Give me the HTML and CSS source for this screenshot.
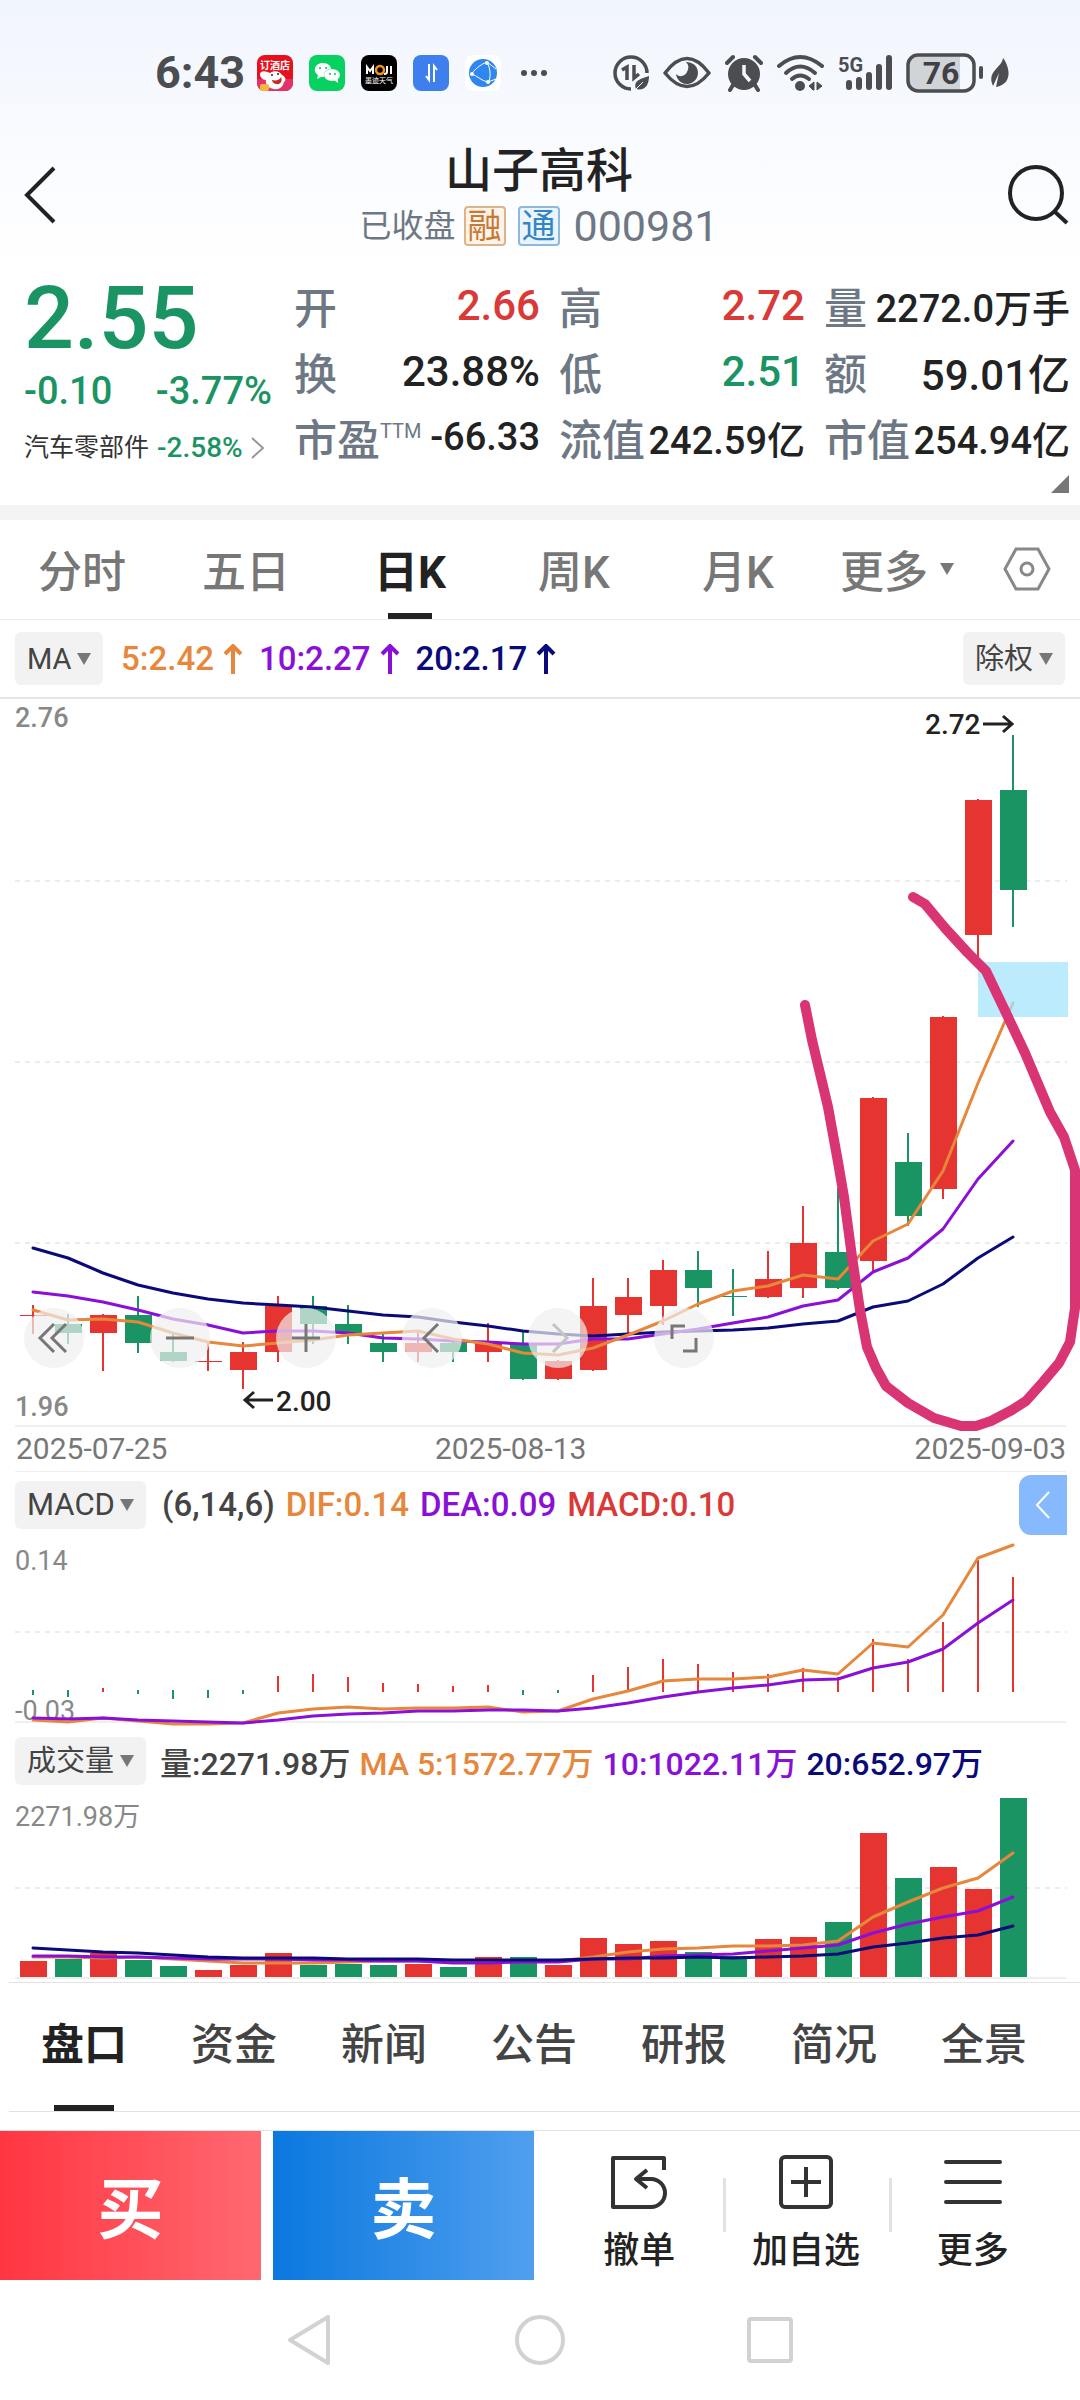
FILE: index.html
```html
<!DOCTYPE html>
<html lang="zh-CN">
<head>
    <meta charset="UTF-8">
    <meta name="viewport" content="width=device-width, initial-scale=1.0">
    <title>山子高科 000981</title>
    <link rel="stylesheet" href="styles.css">
</head>
<body>
    <div class="top">
        <!-- Status bar -->
        <div class="status-bar">
            <div class="status-left">
                <span class="clock">6:43</span>
                <svg class="app-icon" viewBox="0 0 36 36">
                    <rect width="36" height="36" rx="8" fill="#e8101c"/>
                    <path d="M0 24h36v4a8 8 0 0 1-8 8H8a8 8 0 0 1-8-8z" fill="#e0336a"/>
                    <text x="18" y="14" font-size="10" text-anchor="middle" fill="#fff" font-weight="700">订酒店</text>
                    <path d="M4 17c3-2 7 0 9 1 4-3 10-2 12 2 3 1 5 5 2 7-1 5-5 8-10 7-6-1-9-5-8-9-4 0-8-5-5-8z" fill="#fff"/>
                    <path d="M15 25c4 1 8 0 9-3 2 4-1 8-4 7-3 0-5-2-5-4z" fill="#c92a20"/>
                    <circle cx="15" cy="20" r="1" fill="#222"/><circle cx="21" cy="19" r="1" fill="#222"/>
                    <rect x="3" y="29" width="9" height="7" rx="2" fill="#f6b63c"/>
                </svg>
                <svg class="app-icon" viewBox="0 0 36 36">
                    <rect width="36" height="36" rx="8" fill="#07d160"/>
                    <path d="M14 8c5 0 8 3 8 6-4 0-8 3-7 8h-3l-4 2 1-4C3 16 6 8 14 8z" fill="#fff"/>
                    <ellipse cx="23" cy="20" rx="8" ry="6" fill="#fff"/>
                    <path d="M25 25l4 3v-4z" fill="#fff"/>
                    <g fill="#07c55b"><circle cx="11" cy="13" r="1"/><circle cx="17" cy="13" r="1"/><circle cx="21" cy="19" r="1"/><circle cx="26" cy="19" r="1"/></g>
                </svg>
                <svg class="app-icon" viewBox="0 0 36 36">
                    <rect width="36" height="36" rx="8" fill="#000"/>
                    <path d="M6 19v-7l3 4 3-4v7M26 11v6q0 2-3 2M30 11v8" fill="none" stroke="#fff" stroke-width="2"/>
                    <circle cx="19" cy="15" r="4" fill="none" stroke="#f5921e" stroke-width="2.5"/>
                    <text x="18" y="28" font-size="7" text-anchor="middle" fill="#fff">墨迹天气</text>
                </svg>
                <svg class="app-icon" viewBox="0 0 36 36">
                    <rect width="36" height="36" rx="8" fill="#3f7eed"/>
                    <path d="M16 9v16l-3-4M21 27V11l3 4" fill="none" stroke="#fff" stroke-width="2"/>
                </svg>
                <svg class="app-icon" viewBox="0 0 36 36">
                    <rect width="36" height="36" rx="8" fill="#fff"/>
                    <circle cx="18" cy="18" r="14" fill="#2f86ee"/>
                    <path d="M5 20C10 15 14 10 22 7M22 7c4 8 4 16 1 21M6 19c6 1 10 7 17 8M22 7l9 7M23 27l8-3" fill="none" stroke="#fff"/>
                    <circle cx="22" cy="8" r="2" fill="#fff"/><circle cx="7" cy="19" r="2" fill="#fff"/><circle cx="23" cy="27" r="2" fill="#fff"/>
                </svg>
                <svg class="more-dots" viewBox="0 0 26 36"><g fill="#4b4d50"><circle cx="3" cy="18" r="3"/><circle cx="13" cy="18" r="3"/><circle cx="23" cy="18" r="3"/></g></svg>
            </div>
            <div class="status-right">
                <svg width="36" height="38" viewBox="0 0 36 38">
                    <path d="M18 35A16 16 0 1 1 34 19" fill="none" stroke="#4b4d50" stroke-width="3.5"/>
                    <path d="M9 16l5-3v13M21 11v13l5-4" fill="none" stroke="#4b4d50" stroke-width="3.5"/>
                    <path d="M36 22c0 9-4 15-13 13-3-9 5-10 13-13z" fill="#4b4d50"/>
                    <path d="M21 37l9-9" stroke="#f5f8fe"/>
                </svg>
                <svg width="48" height="38" viewBox="0 0 48 38">
                    <path d="M2 19Q24-10 46 19Q24 46 2 19z" fill="none" stroke="#4b4d50" stroke-width="3.5" stroke-linejoin="round"/>
                    <path d="M23 8a11 11 0 1 1-10 12c4 4 9 2 11-2s2-7-1-10z" fill="#4b4d50"/>
                </svg>
                <svg width="38" height="38" viewBox="0 0 38 38">
                    <circle cx="19" cy="20" r="16" fill="#4b4d50"/>
                    <path d="M2 9l6-6M36 9l-6-6M8 31l-3 5M30 31l3 5" stroke="#4b4d50" stroke-width="4" stroke-linecap="round"/>
                    <path d="M19 11v9l6 7" fill="none" stroke="#f5f8fe" stroke-width="3.5"/>
                </svg>
                <svg width="47" height="38" viewBox="0 0 47 38">
                    <g fill="none" stroke="#4b4d50" stroke-width="4" stroke-linecap="round"><path d="M2 12Q23-6 45 12"/><path d="M9 19Q23 6 38 19"/><path d="M15 25Q23 18 32 25"/></g>
                    <circle cx="23" cy="32" r="5" fill="#4b4d50"/>
                    <path d="M37 28v8h-1l-4-4zM40 28v8l5-4z" fill="#4b4d50" stroke="#4b4d50"/>
                </svg>
                <svg width="54" height="46" viewBox="0 -4 54 46">
                    <text x="0" y="18" font-size="20" font-weight="700" fill="#4b4d50">5G</text>
                    <g stroke="#4b4d50" stroke-width="6" stroke-linecap="round"><path d="M11 29v4M21 26v7M31 21v12M41 13v20M51 4v29"/></g>
                </svg>
                <svg width="78" height="40" viewBox="0 0 78 40">
                    <path d="M12 3h42v34H12a9 9 0 0 1-9-9V12a9 9 0 0 1 9-9z" fill="#d0d3d8"/>
                    <rect x="2" y="2" width="66" height="36" rx="10" fill="none" stroke="#4b4d50" stroke-width="3.5"/>
                    <text x="35" y="31" font-size="32" font-weight="700" text-anchor="middle" fill="#3f4144">76</text>
                    <path d="M75 15v9" stroke="#4b4d50" stroke-width="4" stroke-linecap="round"/>
                </svg>
                <svg class="leaf" width="20" height="34" viewBox="0 0 20 34">
                    <path d="M13 2c7 9 10 26-7 29l3-14-6 13C-4 15 12 12 13 2z" fill="#4b4d50"/>
                </svg>
            </div>
        </div>

        <!-- Header Section -->
        <header class="header">
            <button class="icon-button back" aria-label="返回">
                <svg width="34" height="58" viewBox="0 0 34 58"><path d="M31 2L4 29l27 27" fill="none" stroke="#222" stroke-width="4"/></svg>
            </button>
            <div class="header-title">
                <h1>山子高科</h1>
                <p class="header-sub">已收盘 <span class="tag tag-orange">融</span><span class="tag tag-blue">通</span> <span class="code">000981</span></p>
            </div>
            <button class="icon-button" aria-label="搜索">
                <svg width="64" height="62" viewBox="0 0 64 62"><circle cx="29" cy="29" r="26" fill="none" stroke="#222" stroke-width="4"/><path d="M47 47l13 12" stroke="#222" stroke-width="4"/></svg>
            </button>
        </header>
    </div>

    <!-- Quote -->
    <section class="quote">
        <div class="quote-price">
            <div class="price">2.55</div>
            <div class="change"><span>-0.10</span><span>-3.77%</span></div>
            <a class="industry" href="#industry">汽车零部件 <span>-2.58%</span>
                <svg width="14" height="22" viewBox="0 0 14 22"><path d="M1 1l11 10L1 21" fill="none" stroke="#999" stroke-width="2"/></svg>
            </a>
        </div>
        <dl class="quote-grid">
            <div><dt>开</dt><dd class="red">2.66</dd></div>
            <div><dt>高</dt><dd class="red">2.72</dd></div>
            <div><dt>量</dt><dd class="compact">2272.0万手</dd></div>
            <div><dt>换</dt><dd>23.88%</dd></div>
            <div><dt>低</dt><dd class="green">2.51</dd></div>
            <div><dt>额</dt><dd>59.01亿</dd></div>
            <div><dt>市盈<sup>TTM</sup></dt><dd class="compact">-66.33</dd></div>
            <div><dt>流值</dt><dd class="compact">242.59亿</dd></div>
            <div><dt>市值</dt><dd class="compact">254.94亿</dd></div>
        </dl>
        <span class="corner"></span>
    </section>

    <!-- Period tabs -->
    <nav class="period-tabs">
        <button>分时</button>
        <button>五日</button>
        <button class="active">日K</button>
        <button>周K</button>
        <button>月K</button>
        <button class="more">更多<i class="caret"></i></button>
        <button class="settings" aria-label="设置">
            <svg width="48" height="44" viewBox="0 0 48 44"><path d="M13 2h22l11 20-11 20H13L2 22z" fill="none" stroke="#888" stroke-width="3"/><circle cx="24" cy="22" r="6" fill="none" stroke="#888" stroke-width="3"/></svg>
        </button>
    </nav>

    <div class="legend ma-legend">
        <label class="picker"><select aria-label="主图指标"><option>MA</option></select><i class="caret"></i></label>
        <span class="orange">5:2.42<svg class="up" viewBox="0 0 20 30"><path d="M10 30V2M2 10l8-8 8 8"/></svg></span>
        <span class="purple">10:2.27<svg class="up" viewBox="0 0 20 30"><path d="M10 30V2M2 10l8-8 8 8"/></svg></span>
        <span class="navy">20:2.17<svg class="up" viewBox="0 0 20 30"><path d="M10 30V2M2 10l8-8 8 8"/></svg></span>
        <label class="picker right"><select aria-label="复权"><option>除权</option></select><i class="caret"></i></label>
    </div>

    <!-- Candles -->
    <div class="chart">
        <svg id="kline" viewBox="0 699 1080 773">
            <g class="dash"><path d="M15 881H1067M15 1062H1067M15 1243H1067"/></g>
            <g class="rule"><path d="M15 1426H1066M15 1472H1066"/></g>
            <g id="candles"></g>
            <g id="klineLines"></g>
            <rect x="978" y="962" width="90" height="55" fill="#a5e4fe" fill-opacity=".75"/>
            <g class="axis" font-weight="500"><text x="15" y="727">2.76</text><text x="15" y="1416">1.96</text></g>
            <g class="mark">
                <text x="925" y="734">2.72</text><path d="M983 724h29M1003 716l9 8-9 8"/>
                <text x="276" y="1411">2.00</text><path d="M273 1400h-28M254 1392l-9 8 9 8"/>
            </g>
            <g class="date"><text x="16" y="1459">2025-07-25</text><text x="435" y="1459">2025-08-13</text><text x="1066" y="1459" text-anchor="end">2025-09-03</text></g>
        </svg>
        <div class="chart-tools">
            <button aria-label="最左"><svg viewBox="0 0 60 60"><path d="M30 16L16 30l14 14M42 16L28 30l14 14"/></svg></button>
            <button aria-label="缩小"><svg viewBox="0 0 60 60"><path d="M16 30h28"/></svg></button>
            <button aria-label="放大"><svg viewBox="0 0 60 60"><path d="M16 30h28M30 16v28"/></svg></button>
            <button aria-label="左移"><svg viewBox="0 0 60 60"><path d="M36 16L22 30l14 14"/></svg></button>
            <button aria-label="右移" disabled><svg viewBox="0 0 60 60"><path d="M25 16l14 14-14 14"/></svg></button>
            <button aria-label="全屏"><svg viewBox="0 0 60 60"><path d="M18 31V18h13M42 30v13H29"/></svg></button>
        </div>
        <svg class="drawing" viewBox="0 699 1080 773">
            <path d="M805 1005L812 1040L828 1107L838 1162L844 1197L852 1257L860 1310L867 1347L876 1368L886 1386L908 1403L934 1418L961 1426H976L991 1421L1012 1410L1026 1401L1043 1382L1059 1363L1070 1342L1075 1308V1170L1064 1137L1050 1112L1025 1053L1008 1017L986 971L967 952L945 928L925 904L913 897"/>
        </svg>
    </div>

    <!-- MACD -->
    <div class="legend macd-legend">
        <label class="picker"><select aria-label="副图指标一"><option>MACD</option></select><i class="caret"></i></label>
        <span>(6,14,6)</span>
        <span class="orange">DIF:0.14</span>
        <span class="purple">DEA:0.09</span>
        <span class="red">MACD:0.10</span>
        <button class="expand" aria-label="展开"><svg width="16" height="28" viewBox="0 0 16 28"><path d="M14 1L2 14l12 13" fill="none" stroke="#fff" stroke-width="2"/></svg></button>
    </div>
    <svg class="plot" id="macd" viewBox="0 1537 1080 190">
        <g class="dash"><path d="M15 1632H1067"/></g>
        <g class="rule"><path d="M15 1722H1066"/></g>
        <g class="axis"><text x="15" y="1570">0.14</text><text x="15" y="1720">-0.03</text></g>
        <g id="macdBars"></g>
        <g id="macdLines"></g>
    </svg>

    <!-- Volume -->
    <div class="legend volume-legend">
        <label class="picker"><select aria-label="副图指标二"><option>成交量</option></select><i class="caret"></i></label>
        <span>量:2271.98万</span>
        <span class="orange">MA 5:1572.77万</span>
        <span class="purple">10:1022.11万</span>
        <span class="navy">20:652.97万</span>
    </div>
    <svg class="plot" id="volume" viewBox="0 1794 1080 188">
        <g class="dash"><path d="M15 1888H1067"/></g>
        <g class="rule"><path d="M15 1978H1066"/></g>
        <g class="axis"><text x="15" y="1826">2271.98万</text></g>
        <g id="volumeBars"></g>
        <g id="volumeLines"></g>
    </svg>

    <!-- Info tabs -->
    <nav class="info-tabs">
        <button class="active">盘口</button>
        <button>资金</button>
        <button>新闻</button>
        <button>公告</button>
        <button>研报</button>
        <button>简况</button>
        <button>全景</button>
    </nav>

    <!-- Trade bar -->
    <div class="trade-bar">
        <button class="trade buy">买</button>
        <button class="trade sell">卖</button>
        <div class="trade-links">
            <button>
                <svg width="60" height="60" viewBox="0 0 60 60"><path d="M55 17V5H4v49h38a13 13 0 0 0 0-28H27M38 17l-11 9 11 9"/></svg>
                撤单
            </button>
            <button>
                <svg width="60" height="60" viewBox="0 0 60 60"><rect x="5" y="4" width="50" height="50" rx="4"/><path d="M30 14v30M15 29h30"/></svg>
                加自选
            </button>
            <button>
                <svg width="60" height="60" viewBox="0 0 60 60"><path d="M3 9h54M3 29h54M3 49h54" stroke-linecap="round"/></svg>
                更多
            </button>
        </div>
    </div>

    <div class="system-nav">
        <button aria-label="后退"><svg width="48" height="54" viewBox="0 0 48 54"><path d="M42 4v46L4 27z"/></svg></button>
        <button aria-label="主页"><svg width="54" height="54" viewBox="0 0 54 54"><circle cx="27" cy="27" r="23"/></svg></button>
        <button aria-label="任务"><svg width="48" height="54" viewBox="0 0 48 54"><rect x="3" y="6" width="42" height="42" rx="2"/></svg></button>
    </div>

    <script src="script.js"></script>
</body>
</html>
```
FILE: styles.css
```css
/* General Styles */
* {
    box-sizing: border-box;
}

body {
    font-family: Roboto, "Noto Sans CJK SC", sans-serif;
    margin: 0;
    background-color: #fff;
    color: #222;
}

button {
    font-family: inherit;
    margin: 0;
    padding: 0;
    border: none;
    background: none;
    color: inherit;
    cursor: pointer;
}

svg {
    display: block;
}

.red { color: #d93a37; }
.green { color: #1b9463; }
.orange { color: #e6873c; }
.purple { color: #8a10d8; }
.navy { color: #0a0a78; }

/* Status bar */
.top {
    background: linear-gradient(#f1f5fe, #fff);
}

.status-bar {
    display: flex;
    justify-content: space-between;
    align-items: center;
    height: 110px;
    padding: 36px 70px 0 155px;
}

.status-left, .status-right {
    display: flex;
    align-items: center;
}

.status-left {
    gap: 16px;
}

.status-right {
    gap: 14px;
}

.clock {
    margin-right: -4px;
    font-size: 45px;
    line-height: 38px;
    font-weight: 700;
    color: #4b4d50;
}

.app-icon {
    width: 36px;
    height: 36px;
}

.more-dots {
    width: 26px;
    height: 36px;
    margin-left: 4px;
}

.leaf {
    margin-left: -8px;
}

/* Header Section */
.header {
    display: flex;
    align-items: center;
    justify-content: space-between;
    height: 154px;
    padding: 16px 9px 0 23px;
}

.header .icon-button {
    width: 64px;
}

.header .back {
    width: 48px;
}

.header-title {
    text-align: center;
}

.header-title h1 {
    margin: 0;
    padding-top: 4px;
    font-size: 47px;
    line-height: 58px;
    font-weight: 500;
}

.header-sub {
    display: flex;
    align-items: center;
    justify-content: center;
    gap: 8px;
    margin: 0;
    font-size: 32px;
    line-height: 52px;
    color: #6e7884;
}

.header-sub .code {
    font-size: 43px;
    margin-left: 6px;
}

.tag {
    width: 42px;
    height: 40px;
    border: 2px solid;
    border-radius: 4px;
    font-size: 34px;
    line-height: 36px;
    text-align: center;
}

.tag + .tag {
    margin-left: 4px;
}

.tag-orange {
    color: #c67a35;
    border-color: #dcb48c;
    background-color: #fdf3e8;
}

.tag-blue {
    color: #3585c6;
    border-color: #8cb9dc;
    background-color: #eaf4fd;
}

/* Quote */
.quote {
    position: relative;
    display: flex;
    align-items: flex-start;
    gap: 22px;
    padding: 8px 10px 27px 24px;
    border-bottom: 15px solid #f4f4f4;
}

.quote-price {
    width: 248px;
    color: #1b9463;
}

.price {
    font-size: 88px;
    line-height: 92px;
    font-weight: 500;
}

.change {
    display: flex;
    justify-content: space-between;
    font-size: 38px;
    line-height: 54px;
    font-weight: 500;
}

.industry {
    display: flex;
    align-items: center;
    gap: 8px;
    font-size: 25px;
    line-height: 60px;
    color: #333;
    text-decoration: none;
    white-space: nowrap;
}

.industry span {
    font-size: 28px;
    font-weight: 500;
    color: #1b9463;
}

.quote-grid {
    flex: 1;
    display: grid;
    grid-template-columns: repeat(3, 1fr);
    column-gap: 19px;
    margin: 0;
}

.quote-grid div {
    display: flex;
    justify-content: space-between;
    align-items: center;
    height: 66px;
    white-space: nowrap;
}

.quote-grid dt {
    font-size: 43px;
    font-weight: 500;
    color: #6e7884;
}

.quote-grid sup {
    font-size: 20px;
    line-height: 20px;
    font-weight: 400;
    vertical-align: 18px;
}

.quote-grid dd {
    margin: 0;
    font-size: 42px;
    font-weight: 500;
}

.quote-grid .compact {
    font-size: 38px;
}

.corner {
    position: absolute;
    right: 11px;
    bottom: 12px;
    border-style: solid;
    border-width: 0 0 18px 18px;
    border-color: transparent transparent #777;
}

/* Period tabs */
.period-tabs {
    display: grid;
    grid-template-columns: repeat(5, 164fr) 145fr 115fr;
    height: 100px;
    border-bottom: 1px solid #eee;
}

.period-tabs button {
    position: relative;
    padding-bottom: 2px;
    font-size: 44px;
    font-weight: 500;
    color: #777;
}

.period-tabs .more {
    display: flex;
    align-items: center;
    justify-content: flex-end;
    gap: 12px;
    padding-right: 11px;
}

.period-tabs .settings {
    display: flex;
    align-items: center;
    justify-content: center;
    padding-left: 8px;
}

.period-tabs .active, .info-tabs .active {
    color: #222;
    font-weight: 700;
}

.active::after {
    content: "";
    position: absolute;
    left: 50%;
    bottom: 0;
    width: 44px;
    height: 6px;
    transform: translateX(-50%);
    background-color: #222;
}

.caret {
    border-style: solid;
    border-width: 12px 7px 0;
    border-color: #777 transparent transparent;
}

/* Indicator rows */
.legend {
    display: flex;
    align-items: center;
    gap: 11px;
    padding: 0 15px;
    font-size: 32px;
    font-weight: 500;
    color: #444;
    white-space: nowrap;
}

.legend span {
    display: flex;
    align-items: center;
    gap: 9px;
}

.legend .picker + span {
    margin-left: 5px;
}

.ma-legend {
    height: 79px;
    border-bottom: 2px solid #e4e6e6;
    font-size: 33px;
    gap: 16px;
}

.ma-legend .picker + span {
    margin-left: 2px;
}

.macd-legend {
    height: 65px;
    padding-right: 13px;
    font-size: 33px;
}

.volume-legend {
    gap: 9px;
    height: 67px;
}

.picker {
    display: flex;
    align-items: center;
    gap: 5px;
    height: 48px;
    padding: 0 12px;
    border-radius: 6px;
    background-color: #f2f2f2;
}

.ma-legend .picker {
    height: 53px;
}

.picker select {
    appearance: none;
    padding: 0;
    border: none;
    background: none;
    font-family: inherit;
    font-size: 29px;
    color: #444;
}

.macd-legend .picker select {
    font-size: 31px;
}

.right, .expand {
    margin-left: auto;
}

.up {
    width: 20px;
    height: 30px;
    fill: none;
    stroke: currentColor;
    stroke-width: 4;
}

.expand {
    display: flex;
    align-items: center;
    justify-content: center;
    width: 48px;
    height: 60px;
    border-radius: 12px 0 0 12px;
    background-color: #87b9fe;
}

/* Charts */
.chart {
    position: relative;
}

.chart svg, .plot {
    width: 100%;
}

.dash path {
    fill: none;
    stroke: #ececec;
    stroke-width: 2;
    stroke-dasharray: 5 5;
}

.rule path {
    fill: none;
    stroke: #eef0ef;
    stroke-width: 2;
}

.axis text {
    font-size: 27px;
    fill: #888;
}

.date text {
    font-size: 30px;
    fill: #777;
}

.mark text {
    font-size: 28px;
    font-weight: 500;
    fill: #222;
}

.mark path {
    fill: none;
    stroke: #222;
    stroke-width: 3;
}

.up-bar { fill: #e63430; }
.down-bar { fill: #1b9463; }

.line {
    fill: none;
    stroke-width: 3;
    stroke-linecap: round;
    stroke-linejoin: round;
}

.line-orange { stroke: #e6873c; }
.line-purple { stroke: #8a10d8; }
.line-navy { stroke: #0a0a78; }

.chart-tools {
    position: absolute;
    left: 24px;
    top: 609px;
    display: flex;
    gap: 66px;
}

.chart-tools button {
    width: 60px;
    height: 60px;
    border-radius: 50%;
    background-color: rgba(240, 240, 240, 0.7);
}

.chart-tools path {
    fill: none;
    stroke: #777;
    stroke-width: 3;
}

.chart-tools button:disabled path {
    stroke: #c4c4c4;
}

.drawing {
    position: absolute;
    left: 0;
    top: 0;
    pointer-events: none;
}

.drawing path {
    fill: none;
    stroke: #d93575;
    stroke-width: 10;
    stroke-linecap: round;
    stroke-linejoin: round;
}

/* Info tabs */
.info-tabs {
    display: grid;
    grid-template-columns: repeat(7, 1fr);
    height: 130px;
    margin-left: 9px;
    padding-right: 21px;
    border-top: 1px solid #e2e2e2;
    border-bottom: 1px solid #e2e2e2;
}

.info-tabs button {
    position: relative;
    padding-bottom: 12px;
    font-size: 43px;
    font-weight: 500;
    color: #444;
}

.info-tabs .active::after {
    width: 60px;
}

/* Trade bar */
.trade-bar {
    display: grid;
    grid-template-columns: 261fr 261fr 534fr;
    column-gap: 12px;
    height: 150px;
    margin-top: 18px;
    border-top: 1px solid #e2e2e2;
}

.trade {
    padding-bottom: 4px;
    font-size: 66px;
    font-weight: 700;
    color: #fff;
}

.buy { background: linear-gradient(90deg, #ff3642, #ff6870); }
.sell { background: linear-gradient(90deg, #0a78df, #509fee); }

.trade-links {
    display: grid;
    grid-template-columns: repeat(3, 1fr);
    align-items: center;
    padding: 16px 24px 0 10px;
}

.trade-links button {
    display: flex;
    flex-direction: column;
    align-items: center;
    gap: 14px;
    font-size: 36px;
    line-height: 48px;
    font-weight: 500;
    position: relative;
}

.trade-links button + button::before {
    content: "";
    position: absolute;
    left: 0;
    top: 25px;
    height: 54px;
    border-left: 3px solid #e2e2e2;
}

.trade-links svg {
    fill: none;
    stroke: #333;
    stroke-width: 4;
    stroke-linejoin: round;
}

/* System navigation */
.system-nav {
    display: flex;
    justify-content: center;
    align-items: center;
    gap: 179px;
    height: 120px;
}

.system-nav svg {
    fill: none;
    stroke: #d2d2d2;
    stroke-width: 4;
    stroke-linejoin: round;
}
```
FILE: script.js
```js
const STEP = 35;
const FIRST = 33;

// open, high, low, close
const candles = [
    [2.08, 2.09, 2.06, 2.08], [2.07, 2.08, 2.05, 2.06], [2.06, 2.08, 2.02, 2.08], [2.08, 2.10, 2.04, 2.05],
    [2.04, 2.06, 2.03, 2.03], [2.03, 2.05, 2.02, 2.03], [2.02, 2.05, 2.00, 2.04], [2.04, 2.10, 2.03, 2.09],
    [2.09, 2.10, 2.05, 2.07], [2.07, 2.09, 2.05, 2.06], [2.05, 2.06, 2.03, 2.04], [2.04, 2.06, 2.03, 2.05],
    [2.05, 2.05, 2.03, 2.04], [2.04, 2.07, 2.03, 2.05], [2.05, 2.06, 2.01, 2.01], [2.01, 2.03, 2.01, 2.03],
    [2.02, 2.12, 2.02, 2.09], [2.08, 2.12, 2.06, 2.10], [2.09, 2.14, 2.07, 2.13], [2.13, 2.15, 2.09, 2.11],
    [2.101, 2.13, 2.08, 2.10], [2.10, 2.15, 2.10, 2.12], [2.11, 2.20, 2.10, 2.16], [2.15, 2.22, 2.11, 2.11],
    [2.14, 2.32, 2.13, 2.32], [2.25, 2.28, 2.18, 2.19], [2.22, 2.41, 2.21, 2.41], [2.50, 2.65, 2.47, 2.65],
    [2.66, 2.72, 2.51, 2.55]
];

const ma5 = [1310, 1320, 1319, 1322, 1333, 1342, 1346, 1343, 1340, 1335, 1333, 1331, 1339, 1344, 1353, 1355, 1348, 1335, 1321, 1304, 1291, 1286, 1275, 1279, 1241, 1224, 1171, 1083, 1003];
const ma10 = [1292, 1296, 1302, 1310, 1319, 1325, 1333, 1331, 1331, 1333, 1338, 1339, 1341, 1342, 1344, 1344, 1339, 1339, 1334, 1329, 1323, 1317, 1306, 1300, 1272, 1258, 1229, 1179, 1141];
const ma20 = [1248, 1258, 1273, 1285, 1293, 1299, 1303, 1305, 1307, 1311, 1315, 1317, 1322, 1326, 1331, 1334, 1336, 1334, 1332, 1331, 1330, 1328, 1324, 1321, 1307, 1301, 1284, 1258, 1237];

// Positive bars go up from the zero line
const macd = [-5, -7, 4, -4, -9, -8, -4, 16, 18, 15, 9, 8, 6, 7, -5, -3, 17, 25, 33, 28, 20, 18, 24, 15, 53, 33, 70, 132, 115];
const dif = [1720, 1722, 1718, 1721, 1724, 1724, 1723, 1713, 1709, 1707, 1709, 1708, 1708, 1707, 1712, 1711, 1699, 1691, 1681, 1679, 1679, 1677, 1670, 1674, 1643, 1647, 1615, 1558, 1545];
const dea = [1718, 1719, 1718, 1720, 1721, 1722, 1723, 1720, 1716, 1714, 1713, 1711, 1711, 1710, 1710, 1711, 1708, 1703, 1697, 1692, 1688, 1685, 1680, 1679, 1668, 1662, 1649, 1623, 1600];

const volume = [16, 18, 24, 17, 11, 7, 12, 24, 12, 13, 12, 13, 10, 20, 20, 12, 39, 33, 36, 25, 21, 38, 40, 55, 144, 99, 110, 88, 179];
const vol5 = [1957, 1957, 1958, 1957, 1959, 1961, 1963, 1963, 1963, 1962, 1961, 1961, 1962, 1962, 1961, 1961, 1957, 1952, 1949, 1948, 1946, 1946, 1945, 1941, 1917, 1902, 1888, 1878, 1853];
const vol10 = [1956, 1956, 1957, 1957, 1958, 1959, 1959, 1959, 1960, 1960, 1961, 1961, 1963, 1963, 1962, 1962, 1959, 1959, 1956, 1955, 1954, 1951, 1948, 1945, 1933, 1924, 1917, 1911, 1897];
const vol20 = [1948, 1950, 1952, 1953, 1955, 1957, 1958, 1958, 1958, 1959, 1959, 1959, 1960, 1960, 1960, 1960, 1959, 1958, 1958, 1957, 1958, 1957, 1956, 1954, 1947, 1943, 1938, 1935, 1926];

function x(i) {
    return FIRST + i * STEP;
}

function priceY(price) {
    return Math.round(700 + (2.76 - price) * 905);
}

function isUp(i) {
    return candles[i][3] >= candles[i][0];
}

function add(id, html) {
    document.getElementById(id).innerHTML += html;
}

function drawLine(id, values, color) {
    const points = values.map((y, i) => x(i) + ',' + y).join(' ');
    add(id, `<polyline class="line line-${color}" points="${points}"/>`);
}

function stick(i, from, to, up) {
    return `<rect class="${up ? 'up-bar' : 'down-bar'}" x="${x(i) - 1}" y="${from}" width="2" height="${to - from}"/>`;
}

function bar(i, top, bottom, up) {
    return `<rect class="${up ? 'up-bar' : 'down-bar'}" x="${x(i) - 13}" y="${top}" width="27" height="${Math.max(bottom - top, 1)}"/>`;
}

// Candles
candles.forEach(([open, high, low, close], i) => {
    const up = isUp(i);
    add('candles', stick(i, priceY(high) - 1, priceY(low) + 1, up));
    add('candles', bar(i, priceY(Math.max(open, close)), priceY(Math.min(open, close)), up));
});
drawLine('klineLines', ma20, 'navy');
drawLine('klineLines', ma10, 'purple');
drawLine('klineLines', ma5, 'orange');

// MACD
macd.forEach((value, i) => {
    add('macdBars', value > 0 ? stick(i, 1692 - value, 1692, true) : stick(i, 1690, 1690 - value, false));
});
drawLine('macdLines', dif, 'orange');
drawLine('macdLines', dea, 'purple');

// Volume
volume.forEach((value, i) => add('volumeBars', bar(i, 1977 - value, 1977, isUp(i))));
drawLine('volumeLines', vol5, 'orange');
drawLine('volumeLines', vol10, 'purple');
drawLine('volumeLines', vol20, 'navy');
```
